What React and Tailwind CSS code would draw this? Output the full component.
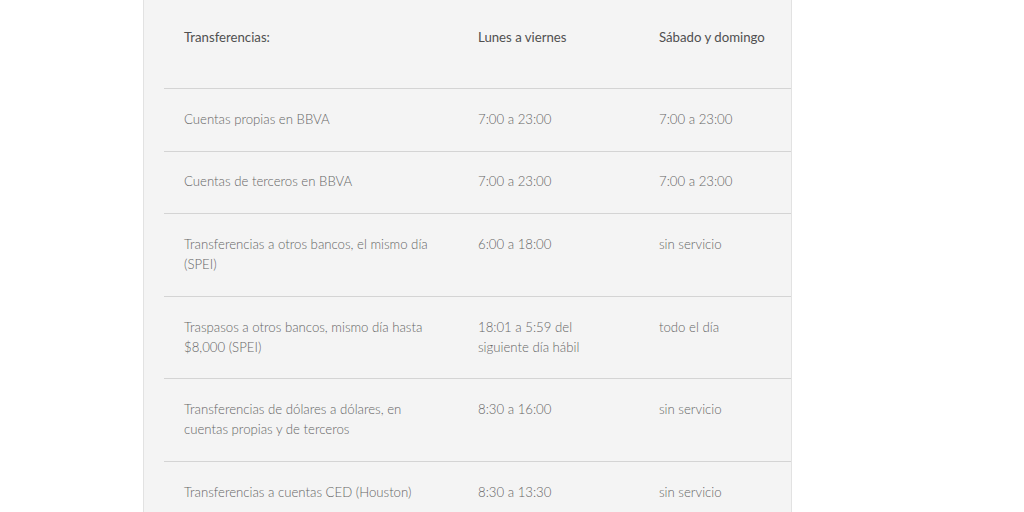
const rows = [
  ['Cuentas propias en BBVA', '7:00 a 23:00', '7:00 a 23:00'],
  ['Cuentas de terceros en BBVA', '7:00 a 23:00', '7:00 a 23:00'],
  ['Transferencias a otros bancos, el mismo día (SPEI)', '6:00 a 18:00', 'sin servicio'],
  ['Traspasos a otros bancos, mismo día hasta $8,000 (SPEI)', '18:01 a 5:59 del siguiente día hábil', 'todo el día'],
  ['Transferencias de dólares a dólares, en cuentas propias y de terceros', '8:30 a 16:00', 'sin servicio'],
  ['Transferencias a cuentas CED (Houston)', '8:30 a 13:30', 'sin servicio'],
];

function Row({ cells, header }) {
  return (
    <div
      className={`flex border-b border-[#d4d4d4] ${
        header ? 'pt-[27px] pb-[41px] text-[#505050]' : 'pt-[19.8px] pb-[21.8px] font-light text-[#666666]'
      }`}
    >
      <div className="w-[294px] px-5">{cells[0]}</div>
      <div className="w-[181px] px-5">{cells[1]}</div>
      <div className="flex-1 px-5">{cells[2]}</div>
    </div>
  );
}

export default function App() {
  return (
    <div className="h-[512px] overflow-hidden bg-white">
      <div
        className="ml-[143px] w-[649px] min-h-[560px] bg-[#f4f4f4] border-x border-[#e2e2e2] pl-5 text-[13.2px] leading-5"
        style={{ fontFamily: 'Lato, "Open Sans", sans-serif' }}
      >
        <Row header cells={['Transferencias:', 'Lunes a viernes', 'Sábado y domingo']} />
        {rows.map((r, i) => (
          <Row key={i} cells={r} />
        ))}
      </div>
    </div>
  );
}
